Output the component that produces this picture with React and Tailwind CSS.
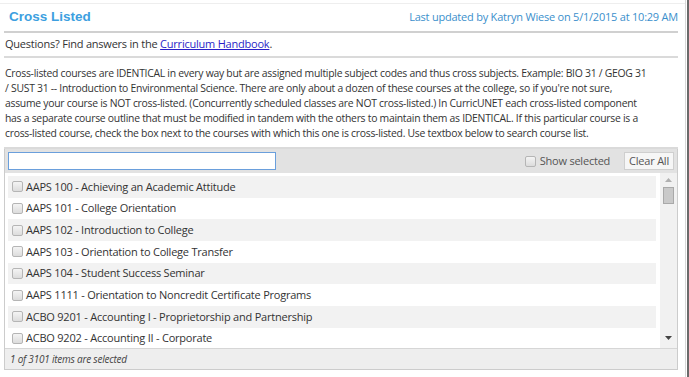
import React from "react";

const courses = [
  "AAPS 100 - Achieving an Academic Attitude",
  "AAPS 101 - College Orientation",
  "AAPS 102 - Introduction to College",
  "AAPS 103 - Orientation to College Transfer",
  "AAPS 104 - Student Success Seminar",
  "AAPS 1111 - Orientation to Noncredit Certificate Programs",
  "ACBO 9201 - Accounting I - Proprietorship and Partnership",
  "ACBO 9202 - Accounting II - Corporate",
];

const para = [
  "Cross-listed courses are IDENTICAL in every way but are assigned multiple subject codes and thus cross subjects. Example: BIO 31 / GEOG 31",
  "/ SUST 31 -- Introduction to Environmental Science. There are only about a dozen of these courses at the college, so if you're not sure,",
  "assume your course is NOT cross-listed. (Concurrently scheduled classes are NOT cross-listed.) In CurricUNET each cross-listed component",
  "has a separate course outline that must be modified in tandem with the others to maintain them as IDENTICAL. If this particular course is a",
  "cross-listed course, check the box next to the courses with which this one is cross-listed. Use textbox below to search course list.",
];

function Box() {
  return (
    <span className="inline-block w-[11px] h-[11px] rounded-[2px] border border-[#b5b5b5] bg-gradient-to-b from-[#f4f4f4] to-[#dcdcdc] shrink-0" />
  );
}

export default function App() {
  return (
    <div
      className="w-[689px] h-[377px] bg-white overflow-hidden flex text-[#333] tracking-[-0.22px]"
      style={{ fontFamily: '"Open Sans", "Noto Sans", sans-serif' }}
    >
      <div className="flex-1 pt-[3px]">
        <div className="border-t border-[#eeeeee]">
          <div className="ml-[4px] w-[674px]">
            <div className="flex justify-between items-center h-[27px]">
              <span
                className="pl-[5px] text-[13.5px] font-bold text-[#3d9fe0] tracking-normal"
                style={{ fontFamily: '"Liberation Sans", Arial, sans-serif' }}
              >
                Cross Listed
              </span>
              <span className="text-[11px] text-[#3b8fcc]">
                Last updated by Katryn Wiese on 5/1/2015 at 10:29 AM
              </span>
            </div>
            <div className="h-[2px] bg-[#d0d0d0]" />
            <div className="h-[23px] flex items-center pl-[1px] text-[11px]">
              <span>
                Questions? Find answers in the{" "}
                <a className="text-[#2a1fc8] underline">Curriculum Handbook</a>.
              </span>
            </div>
            <div className="h-[2px] bg-[#dadada]" />
            <p className="pt-[8px] pl-[1px] text-[10.4px] tracking-[-0.27px] leading-[15px] whitespace-nowrap overflow-hidden">
              {para.map((l, i) => (
                <React.Fragment key={i}>
                  {l}
                  {i < para.length - 1 && <br />}
                </React.Fragment>
              ))}
            </p>
            <div className="mt-[6px] h-[2px] bg-[#dadada]" />
            <div className="border border-[#cccccc] border-t-0">
              <div className="h-[24px] bg-[#e2e2e2] flex items-center justify-between pl-[3px] pr-[3px]">
                <div className="w-[268px] h-[18px] bg-white border border-[#6a9fdc]" />
                <div className="flex items-center">
                  <Box />
                  <span className="ml-[4px] text-[11px] text-[#555]">Show selected</span>
                  <span className="ml-[14px] h-[18px] px-[4px] flex items-center text-[11px] text-[#555] bg-[#f6f6f6] border border-[#cfcfcf]">
                    Clear All
                  </span>
                </div>
              </div>
              <div className="h-[175px] flex bg-white">
                <div className="flex-1 pl-[3px] pt-[3px] pr-[4px] overflow-hidden">
                  {courses.map((c, i) => (
                    <div
                      key={c}
                      className={`h-[21.7px] flex items-center pl-[4px] text-[11px] ${
                        i % 2 === 0 ? "bg-[#f2f2f2]" : "bg-white"
                      }`}
                    >
                      <Box />
                      <span className="ml-[3px]">{c}</span>
                    </div>
                  ))}
                </div>
                <div className="w-[17px] bg-[#f1f1f1] flex flex-col items-center pt-[5px]">
                  <svg width="7" height="4" viewBox="0 0 7 4">
                    <path d="M0 4 L3.5 0 L7 4 Z" fill="#b0b0b0" />
                  </svg>
                  <div className="mt-[5px] w-[11px] h-[17px] bg-[#c9c9c9] border border-[#a9a9a9]" />
                  <div className="flex-1" />
                  <svg width="7" height="4" viewBox="0 0 7 4" className="mb-[8px]">
                    <path d="M0 0 L7 0 L3.5 4 Z" fill="#444" />
                  </svg>
                </div>
              </div>
              <div className="h-[21px] border-t border-[#d6d6d6] bg-[#eeeeee] flex items-center pl-[5px] text-[10px] italic text-[#444]">
                1 of 3101 items are selected
              </div>
            </div>
          </div>
        </div>
      </div>
      <div className="w-px bg-[#d8d8d8]" />
      <div className="w-px bg-white" />
      <div className="w-[2px] bg-[#6a6a6a]" />
    </div>
  );
}
